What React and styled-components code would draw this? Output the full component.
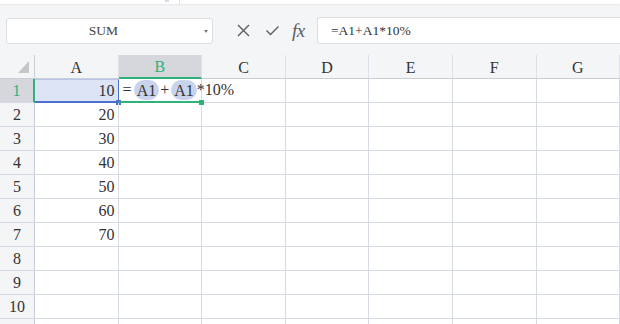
import React from "react";
import styled, { createGlobalStyle } from "styled-components";

const GlobalStyle = createGlobalStyle`
  html, body {
    margin: 0;
    padding: 0;
    background: #f4f5f7;
    overflow: hidden;
  }
  body {
    font-family: "Liberation Serif", "Noto Sans CJK SC", serif;
    color: #333;
  }
`;

const Page = styled.div`
  width: 620px;
  height: 324px;
  overflow: hidden;
  display: flex;
  flex-direction: column;
  & > * {
    flex-shrink: 0;
  }
`;

const TopStrip = styled.div`
  height: 4px;
  background: #fff;
  box-shadow: 0 1px 2px rgba(0, 0, 0, 0.06);
  display: flex;
  padding-left: 165px;
  gap: 10px;
  .mark {
    width: 4px;
    height: 2px;
    background: #d8dae0;
  }
  .sep {
    width: 1px;
    background: #e2e4e8;
  }
`;

const Toolbar = styled.div`
  height: 51px;
  display: flex;
  align-items: center;
  padding: 2px 0 0 6px;
  box-sizing: border-box;
`;

const NameBox = styled.div`
  width: 207px;
  height: 26px;
  box-sizing: border-box;
  background: #fff;
  border: 1px solid #dcdee2;
  border-radius: 3px;
  display: flex;
  align-items: center;
  position: relative;
  font-size: 13.5px;
  color: #444;
  span {
    flex: 1;
    text-align: center;
    padding-right: 12px;
  }
  i {
    position: absolute;
    right: 4px;
    top: 11px;
    width: 0;
    height: 0;
    border-left: 2.5px solid transparent;
    border-right: 2.5px solid transparent;
    border-top: 3px solid #777;
  }
`;

const Icons = styled.div`
  width: 104px;
  display: flex;
  align-items: center;
  padding-left: 23px;
  box-sizing: border-box;
  gap: 14px;
  color: #5a5d63;
  .fx {
    font-family: "Liberation Serif", serif;
    font-style: italic;
    font-size: 19px;
    margin-left: -2px;
    letter-spacing: -0.5px;
  }
`;

const FormulaBox = styled.div`
  flex: 1;
  height: 27px;
  box-sizing: border-box;
  background: #fff;
  border: 1px solid #dcdee2;
  border-right: none;
  border-radius: 3px 0 0 3px;
  display: flex;
  align-items: center;
  padding-left: 13px;
  font-size: 13.5px;
  color: #333;
`;

const Grid = styled.div`
  display: grid;
  grid-template-columns: 35px repeat(7, 83.6px);
  grid-auto-rows: 24px;
  grid-template-rows: 24px;
  background: #fff;
`;

const Corner = styled.div`
  background: #f4f5f7;
  border-right: 1px solid #c9cdd6;
  border-bottom: 1px solid #c9cdd6;
  box-sizing: border-box;
  position: relative;
  &::after {
    content: "";
    position: absolute;
    left: 18px;
    top: 6px;
    width: 0;
    height: 0;
    border-left: 11px solid transparent;
    border-bottom: 12px solid #c4c6ca;
  }
`;

const ColHead = styled.div`
  box-sizing: border-box;
  background: ${(p) => (p.$active ? "#d5d7dc" : "#f4f5f7")};
  border-right: 1px solid #dde0e8;
  border-bottom: ${(p) => (p.$active ? "2px solid #2eb27a" : "1px solid #c9cdd6")};
  color: ${(p) => (p.$active ? "#2eb27a" : "#333")};
  font-size: 16px;
  display: flex;
  align-items: center;
  justify-content: center;
  padding-top: 2px;
`;

const RowHead = styled.div`
  box-sizing: border-box;
  background: ${(p) => (p.$active ? "#d5d7dc" : "#f4f5f7")};
  border-right: ${(p) => (p.$active ? "2px solid #2eb27a" : "1px solid #c9cdd6")};
  border-bottom: 1px solid #d6dae4;
  color: ${(p) => (p.$active ? "#2eb27a" : "#333")};
  font-size: 16px;
  display: flex;
  align-items: center;
  justify-content: center;
  padding-top: 1px;
`;

const Cell = styled.div`
  box-sizing: border-box;
  border-right: 1px solid #d6dae4;
  border-bottom: 1px solid #d6dae4;
  font-size: 16px;
  display: flex;
  align-items: center;
  justify-content: flex-end;
  padding: 1px 3px 0 0;
  position: relative;
`;

const RefCell = styled(Cell)`
  background: #dde4f5;
  border-right: 1.5px solid #4b6fd1;
  border-bottom: 2px solid #4b6fd1;
  border-top: 1px solid #b9c6ea;
  &::after {
    content: "";
    position: absolute;
    right: -3px;
    bottom: -4px;
    width: 5px;
    height: 5px;
    background: #4b6fd1;
  }
`;

const EditCell = styled(Cell)`
  justify-content: flex-start;
  padding: 0 0 0 3px;
  border-bottom: 2px solid #2eb27a;
  white-space: nowrap;
  overflow: visible;
  z-index: 1;
  &::after {
    content: "";
    position: absolute;
    right: -3px;
    bottom: -4px;
    width: 5px;
    height: 5px;
    background: #2eb27a;
  }
`;

const Op = styled.span`
  margin: 0 2px 0 1px;
`;

const Ref = styled.span`
  display: inline-block;
  background: #c9d3ec;
  border-radius: 10px;
  padding: 0 3px;
  height: 20px;
  line-height: 21px;
`;

const Cross = () => (
  <svg width="15" height="15" viewBox="0 0 15 15">
    <path d="M2 2 L13 13 M13 2 L2 13" stroke="currentColor" strokeWidth="1.4" fill="none" />
  </svg>
);

const Check = () => (
  <svg width="15" height="15" viewBox="0 0 15 15">
    <path d="M1.5 7.5 L5.5 11.5 L13.5 3.5" stroke="currentColor" strokeWidth="1.4" fill="none" />
  </svg>
);

const cols = ["A", "B", "C", "D", "E", "F", "G"];
const values = [10, 20, 30, 40, 50, 60, 70];

export default function App() {
  // 10 numbered rows plus one partly visible row at the bottom edge
  const rows = Array.from({ length: 11 }, (_, i) => i + 1);
  return (
    <Page>
      <GlobalStyle />
      <TopStrip>
        <div className="mark" />
        <div className="sep" />
      </TopStrip>
      <Toolbar>
        <NameBox>
          <span>SUM</span>
          <i />
        </NameBox>
        <Icons>
          <Cross />
          <Check />
          <span className="fx">fx</span>
        </Icons>
        <FormulaBox>=A1+A1*10%</FormulaBox>
      </Toolbar>
      <Grid>
        <Corner />
        {cols.map((c) => (
          <ColHead key={c} $active={c === "B"}>{c}</ColHead>
        ))}
        {rows.map((r) => (
          <React.Fragment key={r}>
            <RowHead $active={r === 1}>{r <= 10 ? r : ""}</RowHead>
            {cols.map((c) => {
              if (r === 1 && c === "A") return <RefCell key={c}>10</RefCell>;
              if (r === 1 && c === "B")
                return (
                  <EditCell key={c}>
                    <Op>=</Op>
                    <Ref>A1</Ref>
                    <Op>+</Op>
                    <Ref>A1</Ref>
                    <span>*10%</span>
                  </EditCell>
                );
              return (
                <Cell key={c}>{c === "A" && values[r - 1] ? values[r - 1] : ""}</Cell>
              );
            })}
          </React.Fragment>
        ))}
      </Grid>
    </Page>
  );
}
